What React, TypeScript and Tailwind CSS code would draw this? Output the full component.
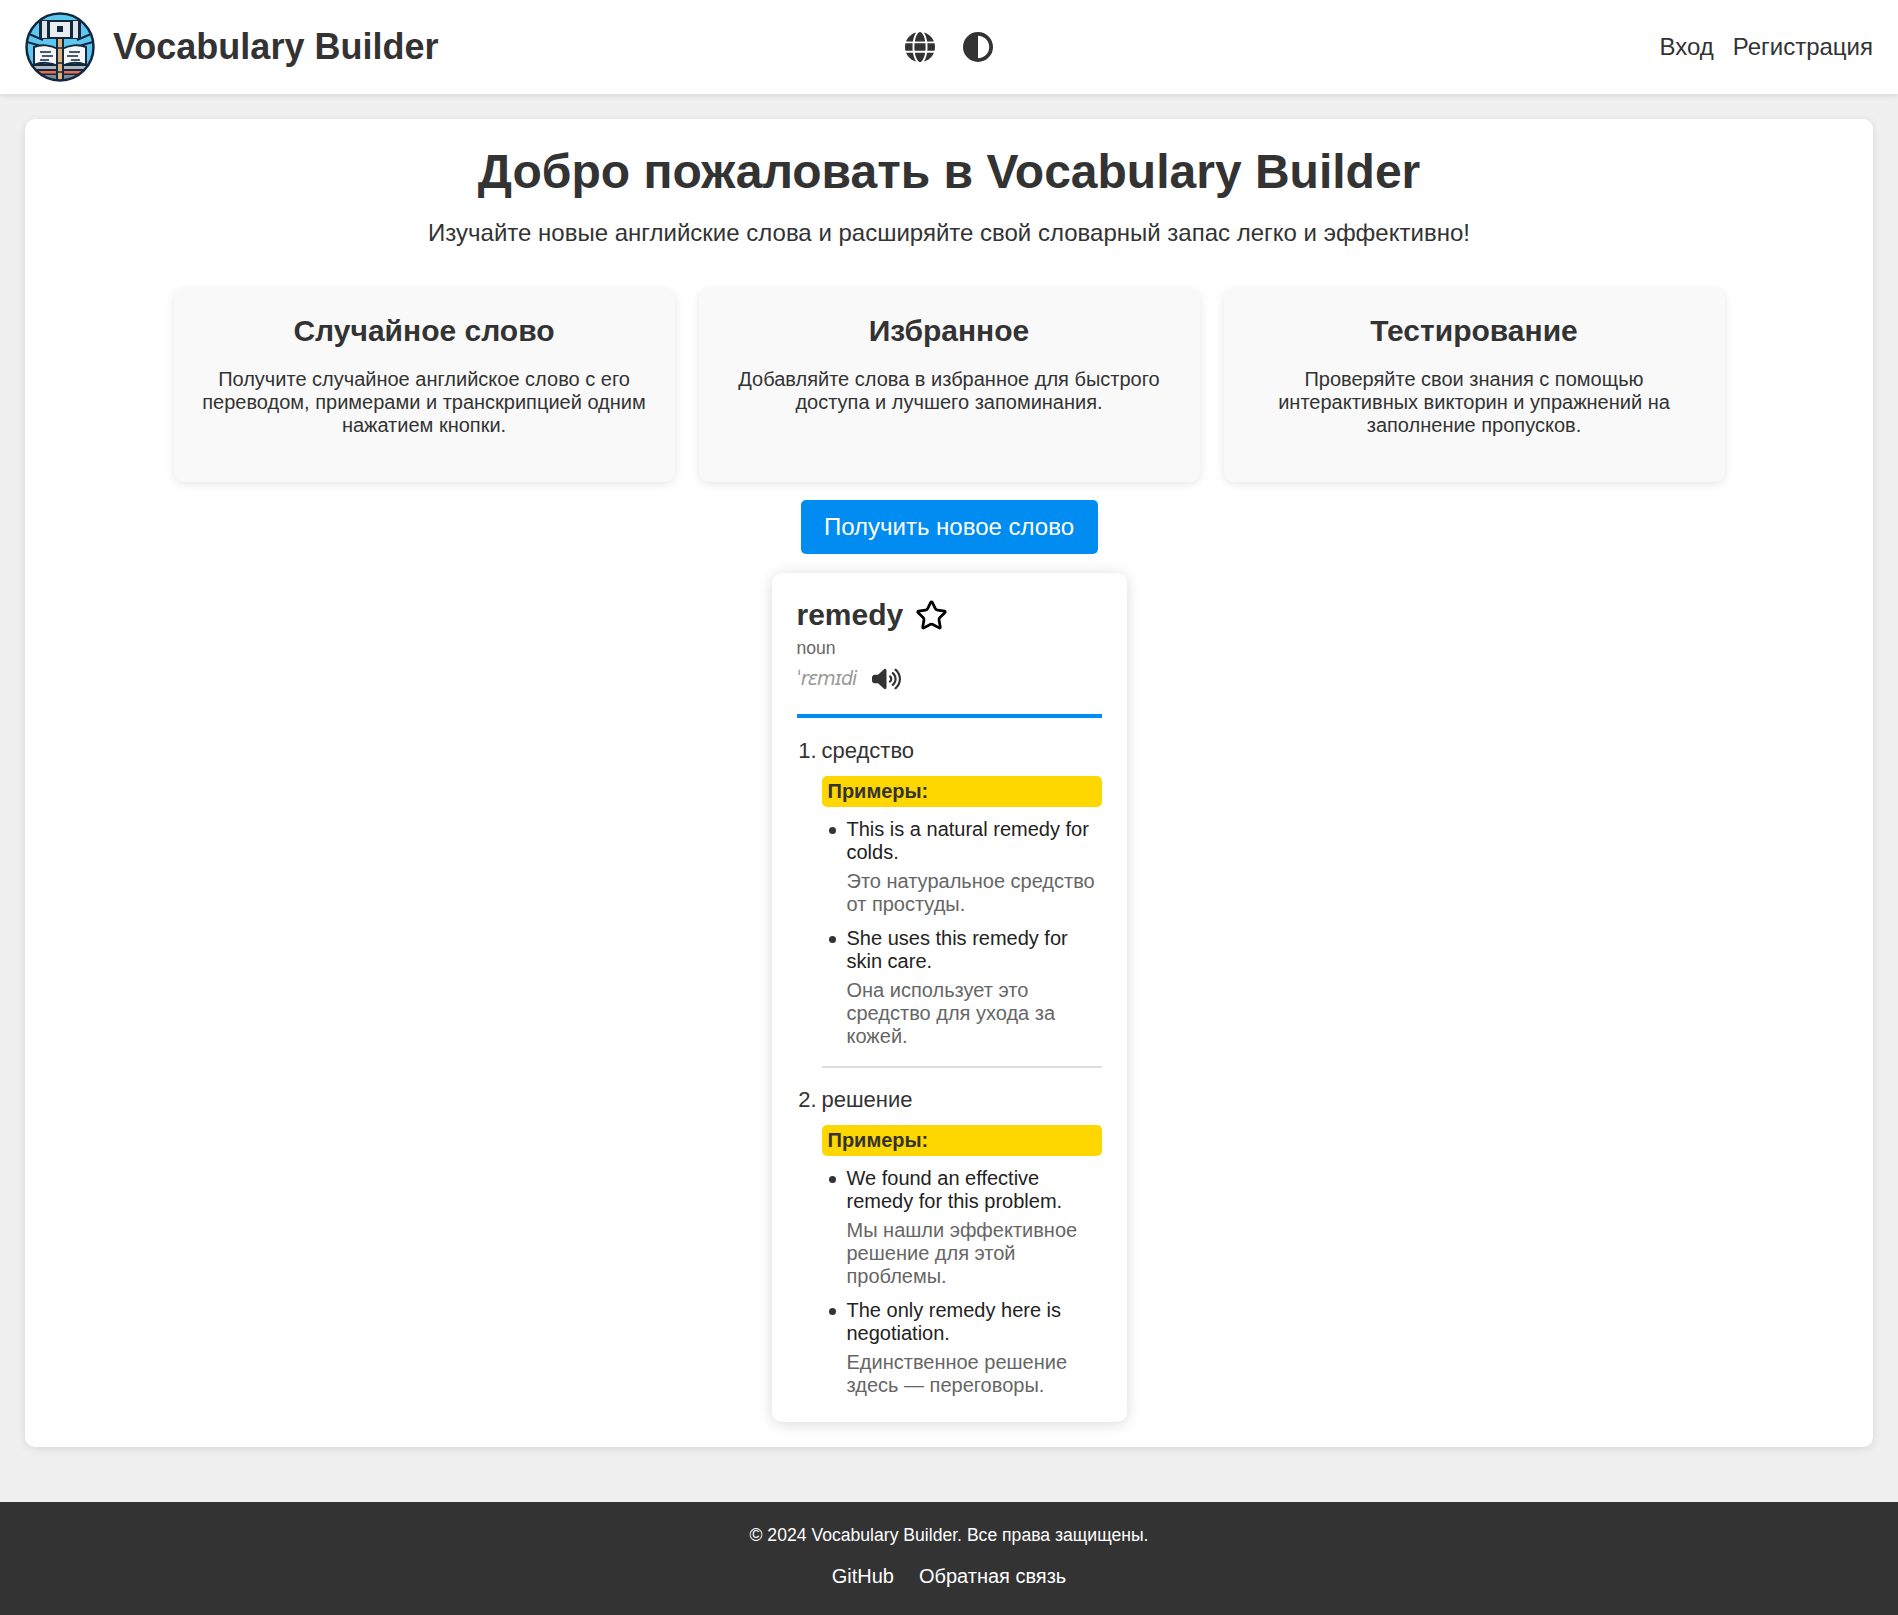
import { Star } from 'lucide-react';
import { FaGlobe, FaCircleHalfStroke, FaVolumeHigh } from 'react-icons/fa6';

const features = [
  {
    title: 'Случайное слово',
    text: 'Получите случайное английское слово с его переводом, примерами и транскрипцией одним нажатием кнопки.',
  },
  {
    title: 'Избранное',
    text: 'Добавляйте слова в избранное для быстрого доступа и лучшего запоминания.',
  },
  {
    title: 'Тестирование',
    text: 'Проверяйте свои знания с помощью интерактивных викторин и упражнений на заполнение пропусков.',
  },
];

const meanings = [
  {
    word: 'средство',
    examples: [
      ['This is a natural remedy for colds.', 'Это натуральное средство от простуды.'],
      ['She uses this remedy for skin care.', 'Она использует это средство для ухода за кожей.'],
    ],
  },
  {
    word: 'решение',
    examples: [
      ['We found an effective remedy for this problem.', 'Мы нашли эффективное решение для этой проблемы.'],
      ['The only remedy here is negotiation.', 'Единственное решение здесь — переговоры.'],
    ],
  },
];

function Logo() {
  return (
    <svg viewBox="0 0 70 70" className="w-[70px] h-[70px] shrink-0">
      <clipPath id="logo-clip">
        <circle cx="35" cy="35" r="33" />
      </clipPath>
      <circle cx="35" cy="35" r="34" fill="#5cc8f0" />
      <g clipPath="url(#logo-clip)">
        <path d="M2 30 L16 34 M4 22 L18 28 M68 30 L54 34 M66 22 L52 28" stroke="#12283f" strokeWidth="2" />
        <rect x="14" y="8" width="42" height="19" rx="2" fill="#12283f" />
        <rect x="17" y="9" width="5" height="17" fill="#dfe3e6" />
        <rect x="25" y="10" width="20" height="15" fill="#e8ecef" />
        <rect x="48" y="9" width="5" height="17" fill="#dfe3e6" />
        <rect x="32" y="14" width="6" height="6" fill="#12283f" />
        <rect x="0" y="52" width="70" height="18" fill="#12283f" />
        <rect x="8" y="54" width="54" height="3" fill="#aeb9c0" />
        <rect x="8" y="59" width="54" height="2.5" fill="#ef6a4f" />
        <rect x="10" y="63" width="50" height="5" fill="#7f8c95" />
        <path d="M9 35 C16 32 26 33 33 37 V54 C26 50 16 50 9 53 Z" fill="#f5f7f8" stroke="#12283f" strokeWidth="2" />
        <path d="M61 35 C54 32 44 33 37 37 V54 C44 50 54 50 61 53 Z" fill="#f5f7f8" stroke="#12283f" strokeWidth="2" />
        <path d="M15 40 H26 M17 44 H28 M15 48 H24 M44 40 H55 M42 44 H53 M46 48 H55" stroke="#12283f" strokeWidth="1.6" />
        <rect x="31" y="25" width="8" height="45" fill="#12283f" />
        <rect x="33" y="27" width="4" height="41" fill="#e0b078" />
        <path d="M31 36 H39 M31 51 H39 M31 60 H39" stroke="#12283f" strokeWidth="1.5" />
      </g>
      <circle cx="35" cy="35" r="33.5" fill="none" stroke="#12283f" strokeWidth="2.5" />
    </svg>
  );
}

export default function App() {
  return (
    <div className="min-h-[1615px] flex flex-col bg-[#f0f0f0] text-[#333] font-['Liberation_Sans',Arial,sans-serif]">
      <header className="h-[94px] bg-white px-[25px] grid grid-cols-3 items-center shadow-[0_2px_5px_rgba(0,0,0,0.1)] relative">
        <div className="flex items-center gap-[18px]">
          <Logo />
          <span className="text-[36px] font-bold leading-none">Vocabulary Builder</span>
        </div>
        <div className="flex items-center justify-center gap-[28px] text-[30px]">
          <FaGlobe className="w-[30px] h-[30px]" />
          <FaCircleHalfStroke className="w-[30px] h-[30px]" />
        </div>
        <nav className="flex justify-end gap-[19px] text-[24px]">
          <a>Вход</a>
          <a>Регистрация</a>
        </nav>
      </header>

      <main className="flex-1 px-[25px] py-[25px]">
        <div className="bg-white rounded-[10px] shadow-[0_2px_10px_rgba(0,0,0,0.1)] px-[25px] pt-[25px] pb-[25px] flex flex-col items-center">
          <h1 className="text-[48px] font-bold leading-[55px] mt-0 text-center">Добро пожаловать в Vocabulary Builder</h1>
          <p className="text-[24px] leading-[28px] mt-[20px] text-center">
            Изучайте новые английские слова и расширяйте свой словарный запас легко и эффективно!
          </p>

          <div className="grid grid-cols-3 gap-[24px] w-[1551px] mt-[42px]">
            {features.map((f) => (
              <div key={f.title} className="h-[193px] bg-[#f9f9f9] rounded-[10px] shadow-[0_2px_10px_rgba(0,0,0,0.1)] px-[25px] pt-[25px] text-center">
                <h2 className="text-[30px] font-bold leading-[34px]">{f.title}</h2>
                <p className="text-[20px] leading-[23px] mt-[20px]">{f.text}</p>
              </div>
            ))}
          </div>

          <button className="mt-[18px] h-[54px] w-[297px] rounded-[5px] bg-[#008cf0] text-white text-[24px]">
            Получить новое слово
          </button>

          <div className="mt-[19px] w-[355px] bg-white rounded-[10px] shadow-[0_2px_15px_rgba(0,0,0,0.15)] p-[25px]">
            <div className="flex items-center gap-[12px]">
              <span className="text-[30px] font-bold leading-[34px]">remedy</span>
              <Star className="w-[33px] h-[33px] text-black" strokeWidth={2} />
            </div>
            <div className="text-[17.6px] leading-[20px] text-[#666] mt-[6px]">noun</div>
            <div className="flex items-center gap-[16px] mt-[9px] h-[24px]">
              <span className="text-[19.2px] italic text-[#999] font-['DejaVu_Sans',sans-serif] tracking-[-1px]">ˈrɛmɪdi</span>
              <FaVolumeHigh className="w-[29px] h-[24px]" />
            </div>
            <div className="h-[4px] bg-[#008cf0] mt-[23px]" />

            <ol className="mt-[20px]">
              {meanings.map((m, i) => (
                <li key={m.word} className={i > 0 ? 'flex mt-[19px] pt-0' : 'flex'}>
                  <span className="w-[25px] text-right pr-[5px] text-[22px] leading-[25px] shrink-0">{i + 1}.</span>
                  <div className="flex-1">
                    <div className="text-[22px] leading-[25px]">{m.word}</div>
                    <div className="mt-[13px] h-[31px] rounded-[5px] bg-[#ffd700] px-[6px] text-[20px] font-bold leading-[31px]">Примеры:</div>
                    <ul className="mt-[11px]">
                      {m.examples.map(([en, ru]) => (
                        <li key={en} className="pl-[25px] mt-[11px] first:mt-0 relative">
                          <span className="absolute left-[7px] top-[9px] w-[7px] h-[7px] rounded-full bg-[#333]" />
                          <div className="text-[20px] leading-[23px] text-[#222]">{en}</div>
                          <div className="text-[20px] leading-[23px] text-[#666] mt-[6px]">{ru}</div>
                        </li>
                      ))}
                    </ul>
                    {i === 0 && <div className="h-[2px] bg-[#ddd] mt-[18px]" />}
                  </div>
                </li>
              ))}
            </ol>
          </div>
        </div>
      </main>

      <footer className="h-[113px] bg-[#333] text-white text-center pt-[23px]">
        <p className="text-[17.6px] leading-[20px]">© 2024 Vocabulary Builder. Все права защищены.</p>
        <div className="flex justify-center gap-[25px] text-[20px] leading-[23px] mt-[20px]">
          <a>GitHub</a>
          <a>Обратная связь</a>
        </div>
      </footer>
    </div>
  );
}
